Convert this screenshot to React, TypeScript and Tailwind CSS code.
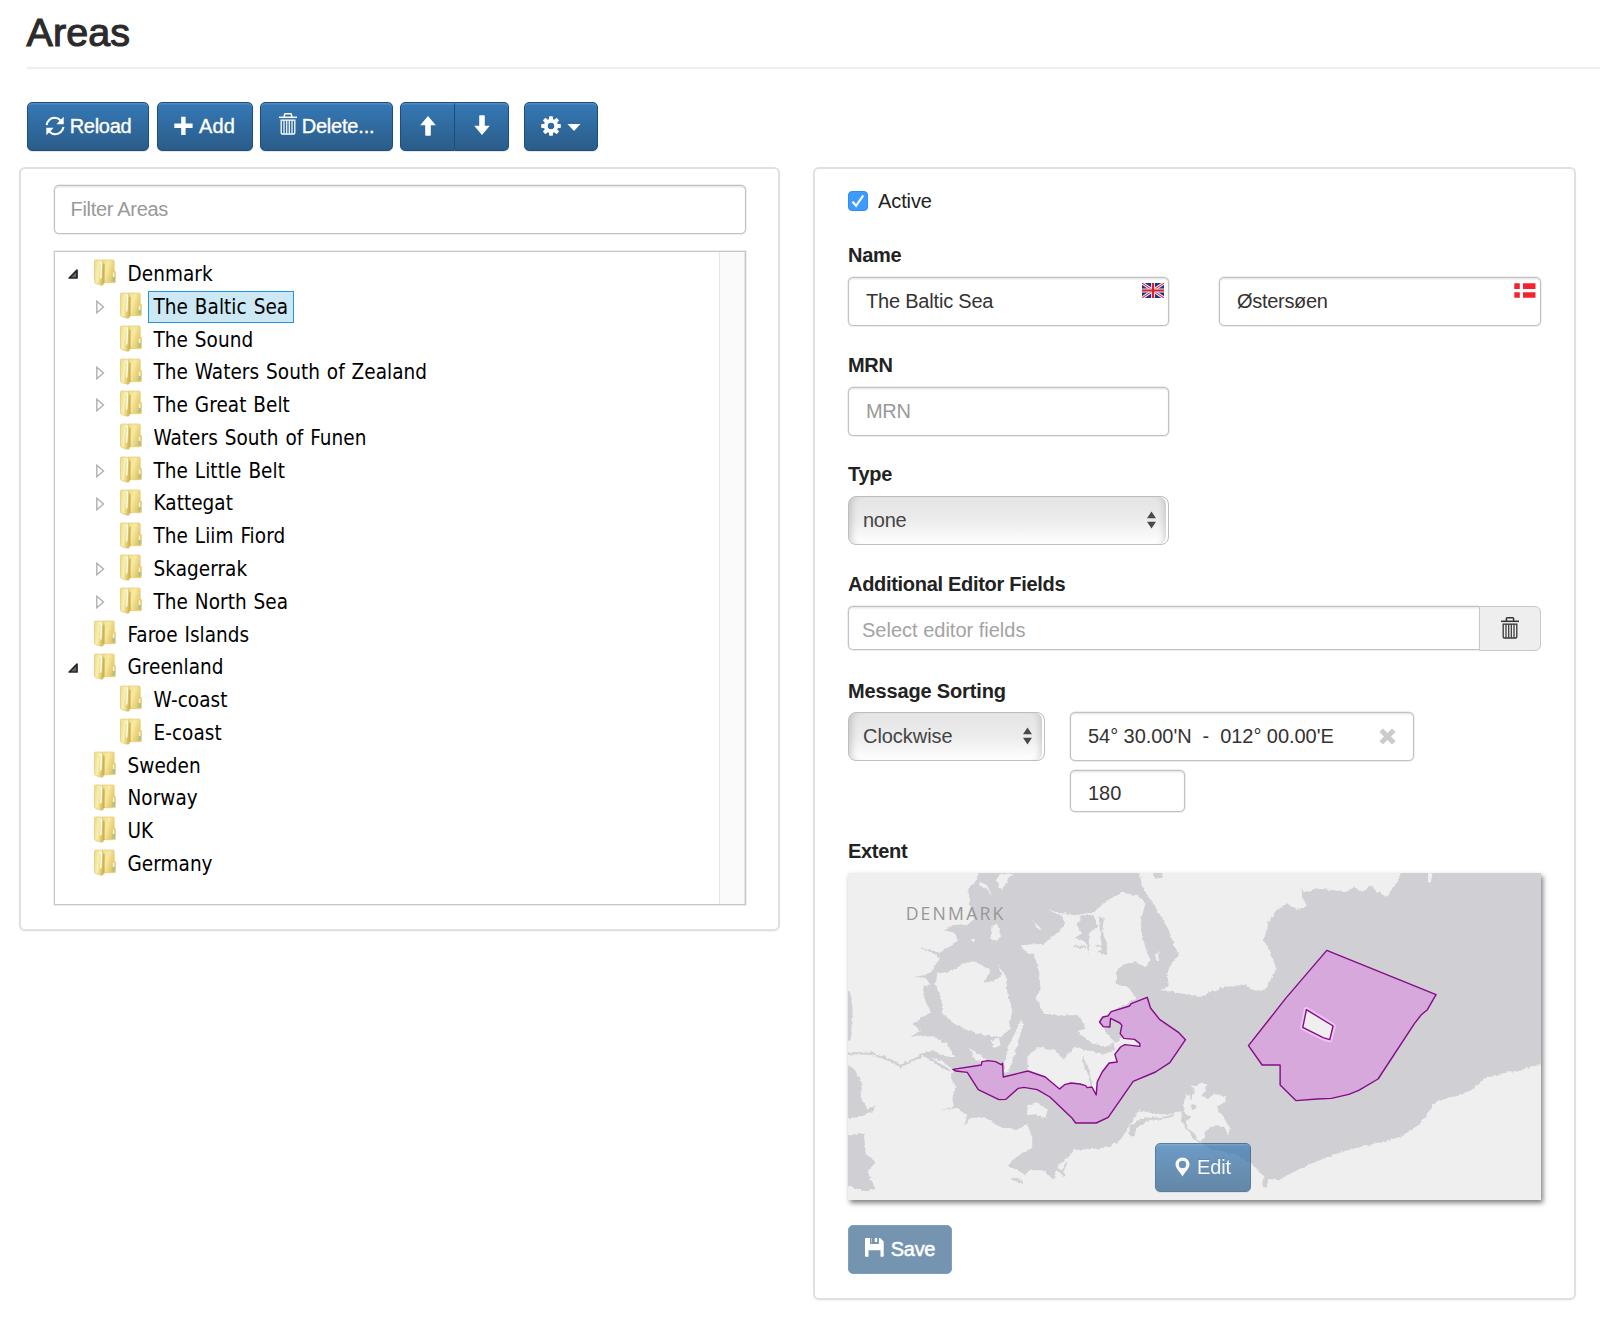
import React from "react";

type Node = { label: string; depth: 0 | 1; state?: "open" | "closed"; selected?: boolean };

const nodes: Node[] = [
  { label: "Denmark", depth: 0, state: "open" },
  { label: "The Baltic Sea", depth: 1, state: "closed", selected: true },
  { label: "The Sound", depth: 1 },
  { label: "The Waters South of Zealand", depth: 1, state: "closed" },
  { label: "The Great Belt", depth: 1, state: "closed" },
  { label: "Waters South of Funen", depth: 1 },
  { label: "The Little Belt", depth: 1, state: "closed" },
  { label: "Kattegat", depth: 1, state: "closed" },
  { label: "The Liim Fiord", depth: 1 },
  { label: "Skagerrak", depth: 1, state: "closed" },
  { label: "The North Sea", depth: 1, state: "closed" },
  { label: "Faroe Islands", depth: 0 },
  { label: "Greenland", depth: 0, state: "open" },
  { label: "W-coast", depth: 1 },
  { label: "E-coast", depth: 1 },
  { label: "Sweden", depth: 0 },
  { label: "Norway", depth: 0 },
  { label: "UK", depth: 0 },
  { label: "Germany", depth: 0 },
];

const RefreshIcon = () => (
  <svg width="20" height="20" viewBox="0 0 20 20" fill="none" stroke="currentColor" strokeWidth="2.1">
    <path d="M1.6 9.2C2 5 5.4 1.8 9.6 1.8c2.4 0 4.4 1 5.9 2.5" />
    <path d="M18.4 10.8c-.4 4.2-3.8 7.4-8 7.4-2.4 0-4.4-1-5.9-2.5" />
    <path d="M18.7 .8v7.4h-7.4z" fill="currentColor" stroke="none" />
    <path d="M1.3 19.2v-7.4h7.4z" fill="currentColor" stroke="none" />
  </svg>
);

const PlusIcon = () => (
  <svg width="19" height="20" viewBox="0 0 19 20" fill="currentColor">
    <path d="M7.200 .8h4.400v6.700h7v4.600h-7v6.900H7.200v-6.900H.3V7.500h6.900z" />
  </svg>
);

const TrashIcon = () => (
  <svg width="18" height="22" viewBox="0 0 18 22" fill="none" stroke="currentColor">
    <path d="M0 4.300h18" strokeWidth="1.500" />
    <path d="M5.400 4V1.700q0-.9.9-.9h5.400q.9 0 .9.900V4" strokeWidth="1.500" />
    <path d="M2.200 7.200h13.600v12.600q0 1.200-1.200 1.200H3.400q-1.200 0-1.200-1.200z" strokeWidth="1.300" />
    <path d="M5 7v13.500M7.700 7v13.500M10.300 7v13.500M13 7v13.500" strokeWidth="1.200" />
  </svg>
);

const UpIcon = () => (
  <svg width="16" height="20" viewBox="0 0 16 20" fill="currentColor">
    <path d="M8 0l7.800 9.300h-5V19q0 .8-.8.8H6q-.8 0-.8-.8V9.300h-5z" />
  </svg>
);

const DownIcon = () => (
  <svg width="16" height="20" viewBox="0 0 16 20" fill="currentColor">
    <path d="M8 20L.2 10.700h5V1q0-.8.8-.8h4q.8 0 .8.800v9.700h5z" />
  </svg>
);

const CogIcon = () => (
  <svg width="20" height="20" viewBox="0 0 20 20" fill="currentColor">
    {[0, 45, 90, 135].map((a) => (
      <path key={a} d="M8.300 .2h3.400l.5 3.500v12.600l-.5 3.500H8.300l-.5-3.500V3.700z" transform={`rotate(${a} 10 10)`} mask="url(#cog)" />
    ))}
    <mask id="cog">
      <rect width="20" height="20" fill="#fff" />
      <circle cx="10" cy="10" r="3.500" fill="#000" />
    </mask>
    <circle cx="10" cy="10" r="5.300" fill="none" stroke="currentColor" strokeWidth="3.600" />
  </svg>
);

const SaveIcon = () => (
  <svg width="19" height="19" viewBox="0 0 19 19" fill="currentColor">
    <path d="M.8 0H5v5.200q0 .8.800.800h7.400q.8 0 .8-.800V0h1.200l3.500 3.500V18q0 .8-.8.800H15.500V12.200H3.500v6.600H.8q-.8 0-.8-.800V.8Q0 0 .8 0z" />
    <path d="M9.800 0h2.400v4H9.800z" />
    <path d="M6 0h1v4.500H6z" opacity=".45" />
  </svg>
);

const PinIcon = () => (
  <svg width="15" height="20" viewBox="0 0 15 20" fill="currentColor" fillRule="evenodd">
    <path d="M7.500 .4c3.900 0 7 3 7 6.900 0 4.600-5 7.900-7 12.300C5.500 15.200.5 11.900.5 7.300.5 3.400 3.600.4 7.500.4zM7.500 3.700a3.700 3.700 0 100 7.400 3.700 3.700 0 000-7.400z" />
  </svg>
);

const RemoveIcon = () => (
  <svg width="17" height="17" viewBox="0 0 17 17" fill="none" stroke="#ccc" strokeWidth="5">
    <path d="M2.200 2.200l12.600 12.600M14.800 2.200L2.200 14.800" />
  </svg>
);

const FolderIcon = () => (
  <svg width="22" height="27" viewBox="0 0 22 27" className="-mt-[3px] shrink-0">
    <defs>
      <linearGradient id="back" x1="0" x2="1" y1="0" y2=".5">
        <stop offset="0" stopColor="#eede8c" />
        <stop offset=".45" stopColor="#f7eaa0" />
        <stop offset="1" stopColor="#dfc260" />
      </linearGradient>
      <linearGradient id="front" x1="0" x2="1" y2=".3">
        <stop offset="0" stopColor="#ecd98a" />
        <stop offset=".5" stopColor="#f8f0b0" />
        <stop offset="1" stopColor="#d6bb5c" />
      </linearGradient>
    </defs>
    <path d="M8 1h11q1.200 0 1.200 1.200v9.300l1.300 1.500v9.500q0 1.200-1.200 1.200H8z" fill="url(#back)" stroke="#e6cf7c" strokeWidth=".8" />
    <path d="M.5 2.200Q.5 1 1.700 1H6.500l2.200 1.500q1.300 1 1.300 3v17.500q0 2.500-1.500 3.200-1 .3-2-.2L1.700 24.500Q.5 24 .5 22.800z" fill="url(#front)" stroke="#e2cc7c" strokeWidth=".8" />
    <path d="M6.700 2.500q1 1.500.8 4l-.8 13" stroke="#fffdec" strokeWidth="1.400" fill="none" />
    <path d="M9.700 5v19" stroke="#c9ad55" strokeWidth="1.800" opacity=".8" />
    <path d="M19.600 13.500v4.500" stroke="#f8f4dc" strokeWidth="1.500" />
    <path d="M19.600 18v3.800" stroke="#8cc4b8" strokeWidth="1.800" />
  </svg>
);

const ukFlag = (
  <svg width="22" height="15" viewBox="0 0 22 15">
    <rect width="22" height="15" fill="#20348f" />
    <path d="M0 0l22 15M22 0L0 15" stroke="#fff" strokeWidth="3" />
    <path d="M0 0l22 15M22 0L0 15" stroke="#dc3a44" strokeWidth="1.100" />
    <path d="M11 0v15M0 7.500h22" stroke="#f3dfe6" strokeWidth="4" />
    <path d="M11 0v15M0 7.500h22" stroke="#d8202f" strokeWidth="2.200" />
  </svg>
);

const dkFlag = (
  <svg width="22" height="15" viewBox="0 0 22 15" fill="#f5222f">
    <path d="M.3 .3h5.500v5.600H.3zM9 .3h12.500v5.600H9zM.3 9.200h5.500v5.600H.3zM9 9.200h12.500v5.600H9z" />
  </svg>
);

const btn =
  "flex h-[49px] items-center justify-center border border-[#1c4d7c] bg-linear-to-b from-[#3579b6] to-[#2a5c89] pb-[2px] text-white shadow-[inset_0_1.5px_0_rgba(255,255,255,0.15),0_1px_1px_rgba(0,0,0,0.1)] [-webkit-text-stroke:0.35px_white] [text-shadow:0_-1px_0_rgba(0,0,0,0.2)]";

const field =
  "flex items-center rounded-[5px] border border-[#c2c2c2] bg-white shadow-[inset_0_1.5px_1.5px_rgba(0,0,0,0.09),0_0_0_0.5px_#ddd]";

function Label({ children, className = "" }: { children: React.ReactNode; className?: string }) {
  return <div className={`h-5 leading-5 font-bold text-[#222] ${className}`}>{children}</div>;
}

function Select({ children, className }: { children: string; className: string }) {
  return (
    <div
      className={`flex h-[49px] items-center justify-between rounded-[8px] border border-[#bdbdbd] bg-linear-to-b from-[#e4e4e4] via-[#ececec] to-white pr-[12px] pl-[14px] pb-[1px] text-[#444] shadow-[inset_8px_0_6px_-5px_rgba(0,0,0,0.15),inset_-2px_0_0_#fff,inset_-9px_0_6px_-5px_rgba(0,0,0,0.15)] ${className}`}
    >
      <span>{children}</span>
      <svg width="9" height="18" viewBox="0 0 9 18" fill="#4a4a4a">
        <path d="M4.500 0.500L9 7.300H0zM4.500 17.500L9 10.700H0z" />
      </svg>
    </div>
  );
}

function TreeRow({ node }: { node: Node }) {
  return (
    <div className={`flex h-[32.78px] items-center ${node.depth ? "pl-[39px]" : "pl-[13px]"}`}>
      <div className="flex w-[26px] shrink-0 items-center">
        {node.state === "open" && (
          <svg width="10" height="10" viewBox="0 0 10 10">
            <path d="M9 1.200v7.800H1.200z" fill="#666" stroke="#262626" strokeWidth="1.700" strokeLinejoin="round" />
          </svg>
        )}
        {node.state === "closed" && (
          <svg width="9" height="14" viewBox="0 0 9 14" className="ml-[2px]">
            <path d="M.8 1.300l6.700 5.700L.8 12.700z" fill="#fff" stroke="#b0b0b0" strokeWidth="1.400" />
          </svg>
        )}
      </div>
      <FolderIcon />
      <span
        className={`ml-[6px] flex h-[32px] items-center border px-[5px] whitespace-pre text-black ${
          node.selected ? "border-[#2196d8] bg-[#cce8f5]" : "border-transparent"
        }`}
      >
        {node.label}
      </span>
    </div>
  );
}

function ExtentMap() {
  return (
    <svg width="693" height="327" viewBox="22 38 2080 981" preserveAspectRatio="none" className="block">
      <defs>
        <filter id="coast" x="-5%" y="-5%" width="110%" height="110%">
          <feTurbulence type="fractalNoise" baseFrequency="0.08" numOctaves="3" seed="4" />
          <feDisplacementMap in="SourceGraphic" scale="11" xChannelSelector="R" yChannelSelector="G" />
        </filter>
      </defs>
      <rect x="0" y="0" width="2120" height="1040" fill="#efefef" />
      <g filter="url(#coast)">
        <g fill="#d0cfd4">
          <path d="M415 0L412 45 400 70 383 85 388 130 400 175 385 190 335 195 305 208 345 218 350 240 325 260 296 278 270 268 235 262 268 274 298 292 285 312 272 335 250 345 220 350 255 352 268 372 246 380 255 425 272 455 240 475 215 490 240 512 207 530 250 525 290 570 258 575 245 585 300 600 340 630 330 650 345 680 335 715 340 740 300 750 350 745 380 765 370 800 388 772 430 770 480 800 530 810 560 790 575 830 575 860 520 895 500 915 530 930 555 945 565 930 610 930 635 955 665 945 660 915 690 885 700 870 760 865 805 860 840 838 870 790 895 750 950 762 1000 762 1022 750 1024 785 1045 815 1062 838 1085 852 1110 865 1180 880 1240 915 1275 955 1315 960 1340 945 1400 915 1500 875 1600 850 1680 830 1740 790 1780 730 1820 712 1860 705 1900 685 1930 655 1980 640 2040 630 2130 604V0H1785L1772 62 1763 65 1762 0H1690L1675 60 1640 110 1610 95 1590 75 1570 95 1540 80 1520 95 1480 90 1430 85 1390 95 1380 85 1385 110 1400 135 1370 150 1340 130 1310 145 1285 185 1270 240 1290 275 1308 325 1290 360 1270 392 1240 390 1215 373 1150 380 1110 395 1080 410 1000 395 960 390 985 378 980 340 990 310 1015 285 1000 250 985 210 950 150 905 80 890 0Z" />
          <path d="M925 10H965V52L945 58z" />
          <path d="M0 370L28 395 36 450 30 540 0 545zM0 600L40 625 65 670 60 710 80 745 105 735 100 750 60 770 0 775zM0 825L70 820 75 880 105 905 80 935 105 985 80 993 50 985 0 970z" />
          <path d="M1268 950l14 8-4 28-8-6z" />
        </g>
        <path d="M10 580L80 578 110 585 150 600 180 618 210 602 250 582 295 612 330 632" fill="none" stroke="#d0cfd4" strokeWidth="7" />
        <g fill="#efefef">
          <path d="M845 97L890 105 915 130 900 180 905 230 915 260 930 300 915 320 880 305 850 312 830 330 825 370 870 385 885 415 830 445 780 485 800 520 822 545 795 558 750 548 710 515 735 500 715 465 660 465 610 460 585 410 600 390 595 330 580 280 560 280 540 255 610 250 640 225 670 200 670 170 625 150 700 165 760 155 800 120z" />
          <path d="M290 340L340 330 365 310 400 303 450 330 430 368 470 358 484 345 470 310 495 345 500 395 515 450 505 510 480 530 430 525 385 510 340 490 305 460 303 420 285 375z" />
          <path d="M541 480L548 490 520 590 505 632 488 640 500 570z" />
          <path d="M560 590L590 560 640 568 670 598 700 560 740 570 790 580 830 570 825 605 800 610 770 660 765 695 700 690 655 690 610 655 562 632z" />
          <path d="M235 530L280 528 320 550 345 592 300 585 270 560zM385 562L440 600 430 615 400 592zM452 200L470 188 482 232 465 242 450 235zM450 540L475 532 480 555 460 562z" />
          <path d="M820 548L850 530 885 535 902 552 880 562 840 570 825 600z" />
          <path d="M415 62L440 75 455 108 440 85 418 80zM465 60L480 42 520 38 500 60 485 90zM575 180L605 208 590 205zM940 285L955 275 952 305zM390 238l14-4-2 14z" />
          <path d="M560 735L590 726 620 750 615 772 585 762 560 765z" />
          <path d="M1028 738L1036 700 1054 716 1066 690 1052 680 1085 668 1102 673 1084 707 1100 716 1122 700 1157 710 1152 728 1130 738 1135 755 1150 772 1160 790 1168 800 1163 825 1150 798 1120 795 1102 805 1092 818 1094 832 1074 842 1060 818 1044 806 1036 785 1050 770 1034 760z" />
          <path d="M640 950L655 915 690 885 700 900 690 950 670 955z" />
        </g>
        <g fill="#d0cfd4">
          <path d="M725 165L760 165 770 200 745 220 745 280 735 245 705 230 725 220 708 192zM775 165L790 175 785 215 800 250 798 285 770 275 785 265 778 215z" />
          <path d="M1050 736L1064 732 1068 742 1056 750zM868 800L900 775 930 778 890 800 878 830 866 825z" />
        </g>
        <g fill="none" stroke="#d0cfd4" strokeWidth="6">
          <path d="M725 590L745 640 752 675M910 775L960 775 1000 765" />
          <path d="M705 230L740 240M700 258L735 262M765 255L800 262" />
        </g>
        <path d="M660 940L680 905M515 955L545 965M650 925L672 948" stroke="#d0cfd4" strokeWidth="7" />
      </g>
      <text x="195" y="178" fontSize="53" letterSpacing="6.5" fill="#979797" fontFamily="'Open Sans', 'Noto Sans', sans-serif" textLength="300">
        DENMARK
      </text>
      <g fill="#d6a8dc" stroke="#850b88" strokeWidth="4.200" strokeLinejoin="round" fillRule="evenodd">
        <path d="M920 411L930 443 957 477 1015 517 1035 538 988 607 945 635 878 663 803 771 767 788 705 788 695 774 628 710 590 688 550 681 533 684 496 717 475 718 413 688 380 636 345 632 337 627 422 614 424 604 442 601 465 604 482 613 486 609 488 650 562 632 614 650 657 686 672 673 692 668 718 671 735 676 740 682 754 680 767 704 770 665 785 635 806 608 830 605 823 582 840 560 853 553 898 558 898 550 882 537 850 534 839 520 844 495 838 488 810 474 808 500 788 499 777 485 787 470 802 467 812 454 867 437 872 430z" />
        <path d="M1459 270L1787 403 1761 448 1743 463 1722 490 1613 656 1555 690 1525 702 1473 714 1430 716 1367 721 1319 674 1319 614 1265 614 1224 556 1335 415z" />
        <path d="M1398 448L1478 497 1468 538 1448 532 1387 501z" fill="none" stroke="#f0c4f3" strokeWidth="16" />
        <path d="M1398 448L1478 497 1468 538 1448 532 1387 501z" fill="#efefef" />
      </g>
    </svg>
  );
}

export default function App() {
  return (
    <div className="h-[1323px] w-[1600px] overflow-hidden bg-white font-['Liberation_Sans',sans-serif] text-[20px] leading-none tracking-[-0.3px] text-[#333]">
      <header className="ml-[27px] h-[69px] border-b-2 border-[#eee] pt-[12px]">
        <h1 className="-ml-[0.5px] text-[39.5px] leading-[40px] tracking-[0.1px] text-[#2b2b2b] [-webkit-text-stroke:1.1px_#2b2b2b]">Areas</h1>
      </header>

      <div className="mt-[33px] ml-[27px] flex">
        <button className={`${btn} w-[122px] gap-[5px] rounded-[5px]`}>
          <RefreshIcon />
          <span>Reload</span>
        </button>
        <button className={`${btn} ml-[8px] w-[96px] gap-[6px] rounded-[5px] pr-[1px] tracking-[0.1px]`}>
          <PlusIcon />
          <span>Add</span>
        </button>
        <button className={`${btn} ml-[7px] w-[133px] gap-[5px] rounded-[5px] tracking-[-0.2px]`}>
          <span className="-mt-[3px]">
            <TrashIcon />
          </span>
          <span>Delete...</span>
        </button>
        <div className="ml-[7px] flex">
          <button className={`${btn} w-[55px] rounded-l-[5px]`}>
            <UpIcon />
          </button>
          <button className={`${btn} w-[54px] rounded-r-[5px] border-l-0`}>
            <span className="-mt-[2px]">
              <DownIcon />
            </span>
          </button>
        </div>
        <button className={`${btn} ml-[15px] w-[74px] gap-[6px] rounded-[5px]`}>
          <CogIcon />
          <svg width="14" height="7" viewBox="0 0 14 7" fill="currentColor" className="mt-[4px]">
            <path d="M.5 0h13L7 7z" />
          </svg>
        </button>
      </div>

      <div className="mt-[16px] ml-[19px] flex items-start gap-[33px]">
        <section className="h-[764px] w-[761px] rounded-[6px] border-2 border-[#e0e0e0] pr-[32px] pl-[32.5px] pt-[16px] shadow-[0_1px_2px_rgba(0,0,0,0.05)]">
          <div className={`${field} h-[49px] pb-[1px] pl-[16px] text-[#999]`}>Filter Areas</div>
          <div className="mt-[17px] flex h-[654px] justify-between border border-[#c6c6c6] shadow-[0_0_0_0.5px_#ddd]">
            <div className="pt-[6px] font-['DejaVu_Sans_Condensed','Noto_Sans',sans-serif] text-[20.5px] tracking-[0.05px] [word-spacing:1px]">
              {nodes.map((n) => (
                <TreeRow key={n.label} node={n} />
              ))}
            </div>
            <div className="w-[26px] border-x border-[#e6e6e6] bg-[#fafafa]" />
          </div>
        </section>

        <section className="h-[1133px] w-[763px] rounded-[6px] border-2 border-[#e0e0e0] px-[33px] pt-[22px] shadow-[0_1px_2px_rgba(0,0,0,0.05)]">
          <div className="flex h-5 items-center tracking-[-0.1px] text-[#222]">
            <span className="mr-[10px] flex size-5 items-center justify-center rounded-[4px] border border-[#2f8df0] bg-[#3f9bfb]">
              <svg width="14" height="14" viewBox="0 0 14 14" fill="none" stroke="#fff" strokeWidth="2.200">
                <path d="M1.500 7.800l3.600 4L12.200 1.500" />
              </svg>
            </span>
            Active
          </div>

          <Label className="mt-[34px]">Name</Label>
          <div className="mt-[12px] flex justify-between">
            <div className={`${field} h-[49px] w-[321px] items-start justify-between pt-[5px] pr-[4px] pl-[17px]`}>
              <span className="pt-[8px] tracking-[-0.2px]">The Baltic Sea</span>
              {ukFlag}
            </div>
            <div className={`${field} h-[49px] w-[322px] items-start justify-between pt-[5px] pr-[4px] pl-[17px]`}>
              <span className="pt-[8px]">Østersøen</span>
              {dkFlag}
            </div>
          </div>

          <Label className="mt-[29px]">MRN</Label>
          <div className={`${field} mt-[12px] h-[49px] w-[321px] pb-[2px] pl-[17px] text-[#999]`}>MRN</div>

          <Label className="mt-[28px]">Type</Label>
          <Select className="mt-[12px] w-[321px]">none</Select>

          <Label className="mt-[29px]">Additional Editor Fields</Label>
          <div className="mt-[12px] flex items-start">
            <div className={`${field} h-[44px] flex-1 rounded-r-none border-r-0 pt-[4px] pl-[13px] tracking-[0px] text-[#a3a3a3]`}>
              Select editor fields
            </div>
            <div className="flex h-[45px] w-[62px] items-center justify-center rounded-r-[6px] border border-[#c8c8c8] bg-[#eee] pb-[1px] text-[#333]">
              <TrashIcon />
            </div>
          </div>

          <Label className="mt-[30px] tracking-[-0.15px]">Message Sorting</Label>
          <div className="mt-[11px] flex gap-[25px] tracking-[-0.05px]">
            <Select className="w-[197px]">Clockwise</Select>
            <div>
              <div className={`${field} h-[49px] w-[344px] justify-between pr-[17px] pb-[1px] pl-[17px]`}>
                <span className="whitespace-pre">{"54° 30.00'N  -  012° 00.00'E"}</span>
                <RemoveIcon />
              </div>
              <div className={`${field} mt-[9px] h-[42px] w-[115px] pt-[4px] pl-[17px]`}>180</div>
            </div>
          </div>

          <Label className="mt-[29px]">Extent</Label>
          <div className="relative mt-[12px] h-[327px] w-[693px] shadow-[2px_3px_5px_rgba(0,0,0,0.5)]">
            <ExtentMap />
            <button
              className={`${btn} absolute top-[270px] left-[307px] w-[96px] gap-[7px] rounded-[5px] tracking-[-0.1px] opacity-70 [-webkit-text-stroke:0px]`}
            >
              <PinIcon />
              <span>Edit</span>
            </button>
          </div>

          <button className="mt-[25px] flex h-[49px] w-[104px] items-center justify-center gap-[7px] rounded-[5px] border border-[#7ba0c0] bg-[#7594b0] pb-[1px] text-white [-webkit-text-stroke:0.5px_white]">
            <span className="-mt-[3px]">
              <SaveIcon />
            </span>
            <span>Save</span>
          </button>
        </section>
      </div>
    </div>
  );
}
